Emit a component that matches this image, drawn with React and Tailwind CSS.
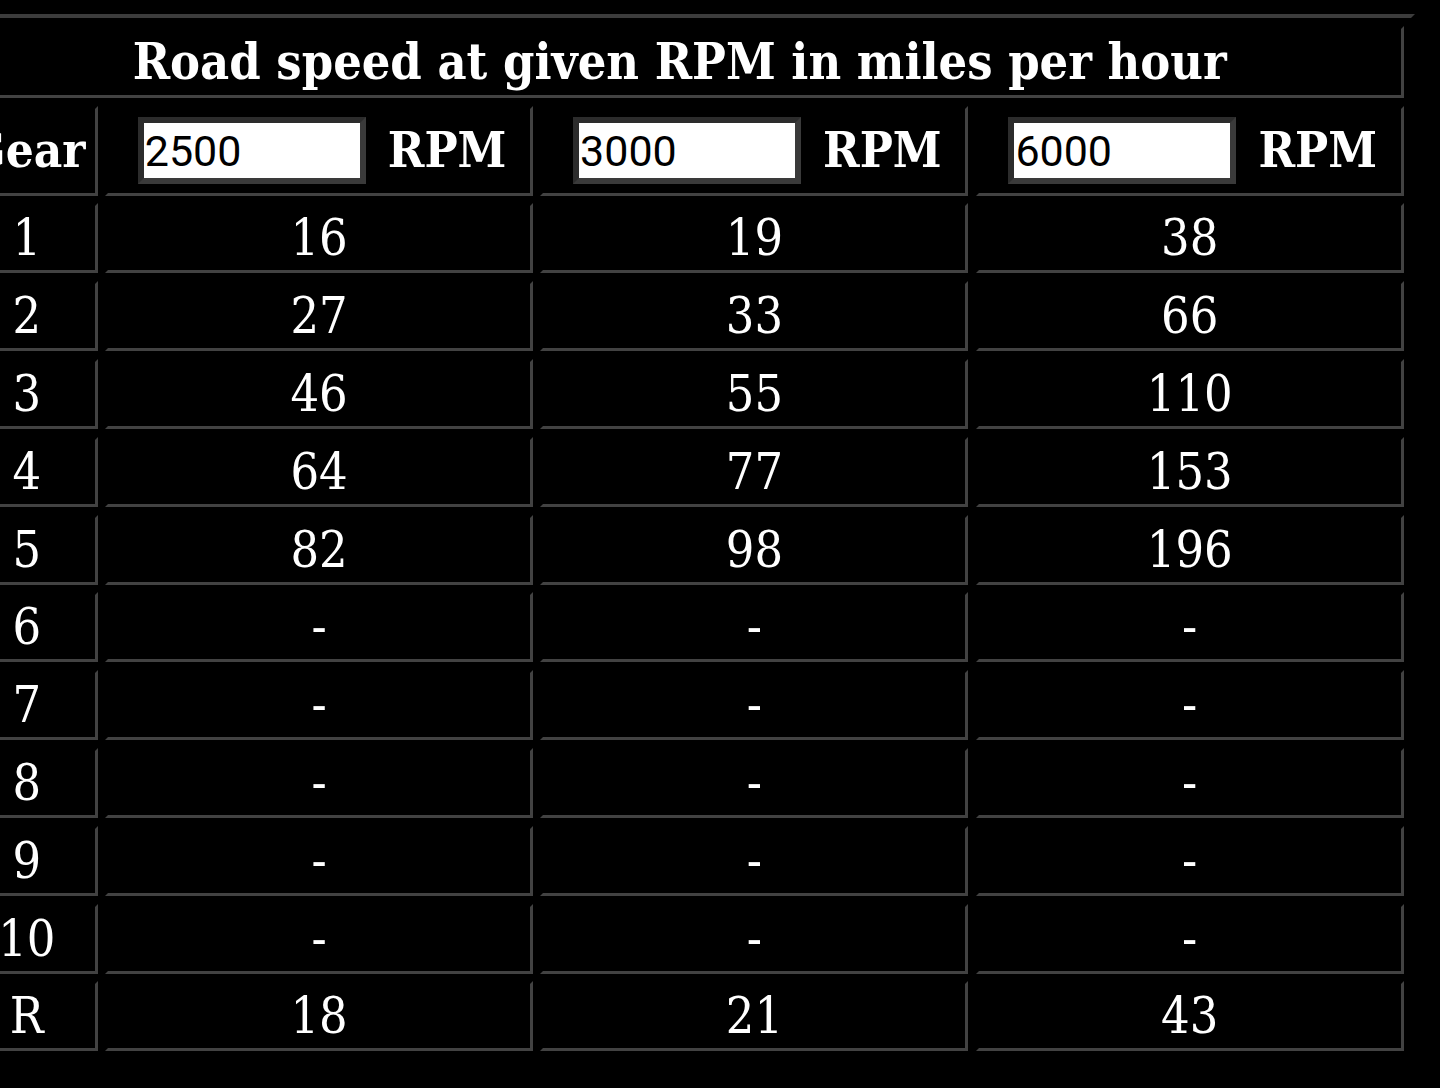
import React from "react";

const rows = [
  ["1", "16", "19", "38"],
  ["2", "27", "33", "66"],
  ["3", "46", "55", "110"],
  ["4", "64", "77", "153"],
  ["5", "82", "98", "196"],
  ["6", "-", "-", "-"],
  ["7", "-", "-", "-"],
  ["8", "-", "-", "-"],
  ["9", "-", "-", "-"],
  ["10", "-", "-", "-"],
  ["R", "18", "21", "43"],
];

const cell =
  "flex items-center justify-center border-[3.9px] border-solid border-t-[#000000] border-l-[#000000] border-b-[#424242] border-r-[#424242]";

function RpmHeader({ value }) {
  return (
    <div className={`${cell} h-[89.8px] gap-[22px] pl-[6px]`}>
      <input
        type="text"
        readOnly
        defaultValue={value}
        className="w-[228px] h-[67px] border-[6px] border-solid border-t-[#2c2c2c] border-l-[#2c2c2c] border-b-[#3a3a3a] border-r-[#3a3a3a] bg-white text-black font-['Roboto',sans-serif] [font-stretch:normal] text-[43px] leading-none pl-[1px] outline-none"
      />
      <span className="font-bold text-[49px] leading-none">RPM</span>
    </div>
  );
}

export default function App() {
  return (
    <div className="w-[1440px] h-[1088px] bg-black overflow-hidden text-white font-['DejaVu_Serif',serif] [font-stretch:condensed]">
      <div className="ml-[-55.5px] mt-[14.4px] w-max grid grid-cols-[142px_428px_428px_428px] gap-x-[7.3px] gap-y-[7.8px] px-[7.3px] py-[7.8px] border-4 border-solid border-t-[#3c3c3c] border-l-[#3c3c3c] border-b-[#000000] border-r-[#000000]">
        <div className={`${cell} col-span-4 h-[71.8px]`}>
          <span className="font-bold text-[50px] leading-none">
            Road speed at given RPM in miles per hour
          </span>
        </div>
        <div className={`${cell} h-[89.8px]`}>
          <span className="font-bold text-[49px] leading-none">Gear</span>
        </div>
        <RpmHeader value="2500" />
        <RpmHeader value="3000" />
        <RpmHeader value="6000" />
        {rows.map((r, i) =>
          r.map((v, j) => (
            <div key={`${i}-${j}`} className={`${cell} h-[70px]`}>
              <span className="text-[50px] leading-none">{v}</span>
            </div>
          ))
        )}
      </div>
    </div>
  );
}
